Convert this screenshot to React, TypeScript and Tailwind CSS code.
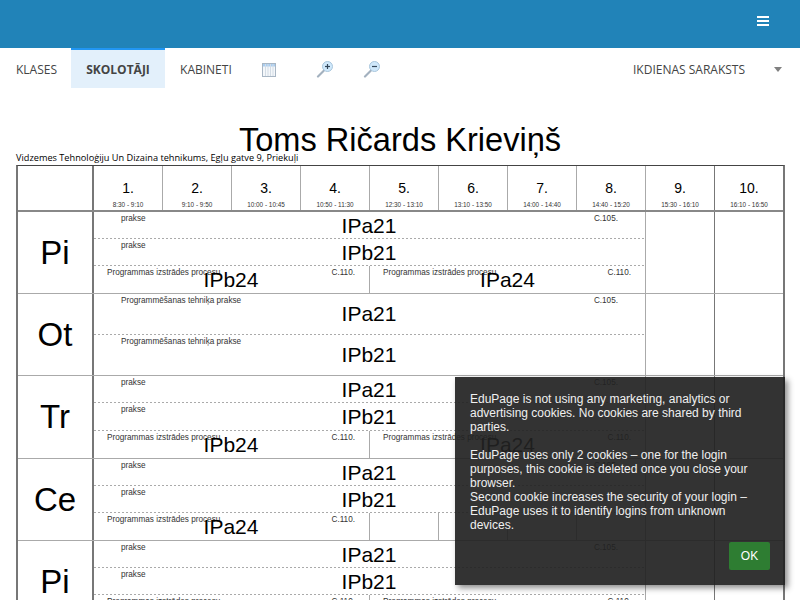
const PERIODS = [
  { n: '1.', time: '8:30 - 9:10' },
  { n: '2.', time: '9:10 - 9:50' },
  { n: '3.', time: '10:00 - 10:45' },
  { n: '4.', time: '10:50 - 11:30' },
  { n: '5.', time: '12:30 - 13:10' },
  { n: '6.', time: '13:10 - 13:50' },
  { n: '7.', time: '14:00 - 14:40' },
  { n: '8.', time: '14:40 - 15:20' },
  { n: '9.', time: '15:30 - 16:10' },
  { n: '10.', time: '16:10 - 16:50' },
]

interface Lesson {
  name: string
  room: string
  group: string
}

interface Day {
  label: string
  height: string
  full: Lesson[]
  left?: Lesson
  right?: Lesson
}

const prakseA = { name: 'prakse', room: 'C.105.', group: 'IPa21' }
const prakseB = { name: 'prakse', room: '', group: 'IPb21' }
const procesuA = { name: 'Programmas izstrādes procesu', room: 'C.110.', group: 'IPa24' }
const procesuB = { name: 'Programmas izstrādes procesu', room: 'C.110.', group: 'IPb24' }

const DAYS: Day[] = [
  { label: 'Pi', height: 'h-[82px]', full: [prakseA, prakseB], left: procesuB, right: procesuA },
  {
    label: 'Ot',
    height: 'h-[82px]',
    full: [
      { name: 'Programmēšanas tehniķa prakse', room: 'C.105.', group: 'IPa21' },
      { name: 'Programmēšanas tehniķa prakse', room: '', group: 'IPb21' },
    ],
  },
  { label: 'Tr', height: 'h-[83px]', full: [prakseA, prakseB], left: procesuB, right: procesuA },
  { label: 'Ce', height: 'h-[82px]', full: [prakseA, prakseB], left: procesuA },
  { label: 'Pi', height: 'h-[82px]', full: [prakseA, prakseB], left: procesuB, right: procesuA },
]

function ZoomIcon({ minus }: { minus?: boolean }) {
  return (
    <svg width="18" height="18" viewBox="0 0 18 18">
      <path d="M2 16.5 L8 10.5" stroke="#a3b1bf" strokeWidth="2.2" strokeLinecap="round" />
      <circle cx="11.5" cy="6.5" r="5" fill="#cfe8fb" stroke="#a9c6dc" strokeWidth="1" />
      <path d="M9 6.5 H14" stroke="#33475a" strokeWidth="1.2" />
      {!minus && <path d="M11.5 4 V9" stroke="#33475a" strokeWidth="1.2" />}
    </svg>
  )
}

function CalendarIcon() {
  return (
    <svg width="14" height="14" viewBox="0 0 14 14">
      <rect x="0.5" y="0.5" width="13" height="13" fill="#f4f7fa" stroke="#a8b6c4" />
      <rect x="1" y="1" width="12" height="2.5" fill="#a9cdf0" />
      <path d="M3.5 1 V13 M6 1 V13 M8.5 1 V13 M11 1 V13" stroke="#d3dce5" strokeWidth="1" />
    </svg>
  )
}

function Dotted() {
  return <div className="h-px shrink-0 bg-[repeating-linear-gradient(90deg,#aaa_0,#aaa_2px,transparent_2px,transparent_4px)]" />
}

function LessonCard({ lesson, half, right }: { lesson: Lesson; half?: boolean; right?: boolean }) {
  return (
    <div className={`relative h-full flex items-center justify-center min-h-0 ${right ? '' : 'pr-px'}`}>
      <span className={`absolute top-px text-[8.2px] leading-[11px] text-[#333] whitespace-nowrap ${half ? 'left-[13px]' : 'left-[27px]'}`}>
        {lesson.name}
      </span>
      {lesson.room && (
        <span className={`absolute top-px text-[8.2px] leading-[11px] text-[#333] ${half ? 'right-[14px]' : 'right-[27px]'}`}>
          {lesson.room}
        </span>
      )}
      <span className="text-[21px] leading-none text-black relative">{lesson.group}</span>
    </div>
  )
}

function DayRow({ day }: { day: Day }) {
  return (
    <div className={`flex border-b border-[#aaa] ${day.height}`}>
      <div className="w-[76px] shrink-0 border-r-2 border-[#777] flex items-center justify-center text-[33px] text-black">
        {day.label}
      </div>
      <div className="w-[551px] shrink-0 flex flex-col">
        {day.full.map((lesson, i) => (
          <div key={i} className="flex-1 min-h-0 flex flex-col">
            <div className="flex-1 min-h-0">
              <LessonCard lesson={lesson} />
            </div>
            {(i === 0 || day.left) && <Dotted />}
          </div>
        ))}
        {day.left && (
          <div className="flex-1 min-h-0 flex">
            <div className="w-[276px] border-r border-[#aaa]">
              <LessonCard lesson={day.left} half />
            </div>
            {day.right ? (
              <div className="flex-1">
                <LessonCard lesson={day.right} half right />
              </div>
            ) : (
              <div className="flex-1 grid grid-cols-[69px_69px_69px_1fr]">
                <div className="border-r border-[#aaa]" />
                <div className="border-r border-[#aaa]" />
                <div className="border-r border-[#aaa]" />
                <div />
              </div>
            )}
          </div>
        )}
      </div>
      <div className="w-[69px] shrink-0 border-l border-[#aaa]" />
      <div className="flex-1 border-l border-[#777]" />
    </div>
  )
}

export default function App() {
  return (
    <div className="relative h-screen overflow-hidden bg-white font-['Liberation_Sans',sans-serif]">
      <div className="h-12 bg-[#2183b8] flex items-center justify-end pr-[31px] pb-[6px]">
        <div className="w-3 flex flex-col gap-[2px]">
          <div className="h-[2px] bg-white" />
          <div className="h-[2px] bg-white" />
          <div className="h-[2px] bg-white" />
        </div>
      </div>

      <div className="h-10 flex items-center font-['Open_Sans',sans-serif] text-xs text-[#444]">
        <div className="px-4 mt-[3px]">KLASES</div>
        <div className="h-full w-[94px] -ml-[2px] pt-px flex items-center justify-center bg-[#e3f0fb] border-t-2 border-[#2196f3] font-bold">
          SKOLOTĀJI
        </div>
        <div className="pl-[15px] w-[82px] mt-[3px]">KABINETI</div>
        <div className="ml-[15px] mt-[3px]">
          <CalendarIcon />
        </div>
        <div className="ml-[40px] mt-px">
          <ZoomIcon />
        </div>
        <div className="ml-[29px] mt-px">
          <ZoomIcon minus />
        </div>
        <div className="ml-auto mt-[3px] flex items-center">
          <span>IKDIENAS SARAKSTS</span>
          <svg className="ml-[29px] mr-[18px] mb-px" width="8" height="5" viewBox="0 0 8 5">
            <path d="M0 0 H8 L4 5 Z" fill="#808080" />
          </svg>
        </div>
      </div>

      <h1 className="mt-[33px] text-center text-[32.6px] leading-[38px] text-black">Toms Ričards Krieviņš</h1>
      <div className="-mt-[9px] ml-4 font-['Open_Sans',sans-serif] text-[9.2px] leading-[15px] text-black">
        Vidzemes Tehnoloģiju Un Dizaina tehnikums, Egļu gatve 9, Priekuļi
      </div>

      <div className="mx-4 w-[769px] border-t border-[#444] border-l-2 border-l-[#777] border-r-2 border-r-[#777]">
        <div className="flex h-[46px] border-b-2 border-[#888]">
          <div className="w-[76px] shrink-0 border-r-2 border-[#777]" />
          {PERIODS.map((p, i) => (
            <div
              key={p.n}
              className={`flex flex-col items-center justify-end pb-px text-black ${i < 9 ? 'w-[69px] shrink-0 border-r' : 'flex-1'} ${i === 8 ? 'border-[#777]' : 'border-[#aaa]'}`}
            >
              <div className="text-[14px] leading-[16px] mb-[5px]">{p.n}</div>
              <div className="text-[6.4px] leading-[8px] text-[#333]">{p.time}</div>
            </div>
          ))}
        </div>
        {DAYS.map((day, i) => (
          <DayRow key={i} day={day} />
        ))}
      </div>

      <div className="absolute left-[455px] top-[377px] w-[330px] h-[208px] bg-[#222]/[.92] shadow-[3px_3px_6px_rgba(0,0,0,0.45)] p-[15px] text-xs leading-[14px] text-[#f0f0f0]">
        <p>EduPage is not using any marketing, analytics or advertising cookies. No cookies are shared by third parties.</p>
        <p className="mt-[14px]">EduPage uses only 2 cookies – one for the login purposes, this cookie is deleted once you close your browser.</p>
        <p>Second cookie increases the security of your login – EduPage uses it to identify logins from unknown devices.</p>
        <button className="absolute right-[15px] bottom-[15px] w-[41px] h-[28px] bg-[#2e7d32] rounded-[2px] text-white text-xs">OK</button>
      </div>
    </div>
  )
}
